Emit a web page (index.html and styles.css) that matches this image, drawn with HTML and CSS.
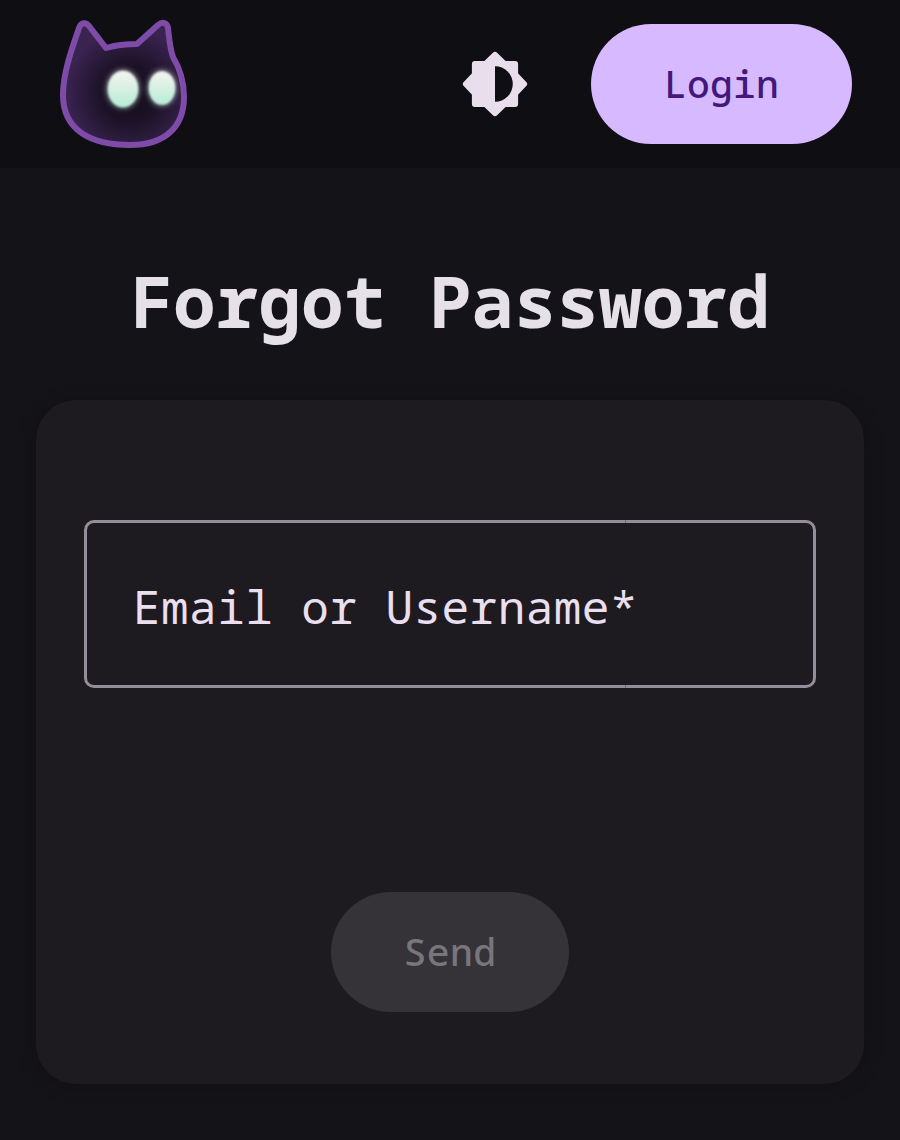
FILE: index.html
```html
<!DOCTYPE html>
<html lang="en">
<head>
<meta charset="utf-8">
<title>Forgot Password</title>
<link rel="stylesheet" href="styles.css">
</head>
<body>
<header class="topbar">
  <a class="logo" href="#" aria-label="Home">
    <svg class="logo-svg" viewBox="0 0 128 130" width="128" height="130">
      <defs>
        <radialGradient id="fur" gradientUnits="userSpaceOnUse" cx="70" cy="74" r="64">
          <stop offset="0" stop-color="#120c19"/>
          <stop offset="0.45" stop-color="#1c1227"/>
          <stop offset="1" stop-color="#3a2350"/>
        </radialGradient>
        <linearGradient id="eye" x1="0" y1="0" x2="0" y2="1">
          <stop offset="0" stop-color="#f3f5ef"/>
          <stop offset="1" stop-color="#b8ecd6"/>
        </linearGradient>
        <filter id="glow" x="-50%" y="-50%" width="200%" height="200%">
          <feGaussianBlur in="SourceGraphic" stdDeviation="3" result="halo"/>
          <feGaussianBlur in="SourceGraphic" stdDeviation="1.1" result="core"/>
          <feMerge><feMergeNode in="halo"/><feMergeNode in="core"/></feMerge>
        </filter>
      </defs>
      <path class="cat" d="M19 9 C21 3 26 3 29 7 L46 29 C56 26 67 25 77 25 L98 6 C103 2 107 4 108 9 C109 18 110 30 113 38 C119 48 124 62 124 78 C124 108 105 126 70 126 C32 126 3 112 3 76 C3 55 11 32 19 9 Z"/>
      <ellipse class="eye" cx="63" cy="70" rx="15" ry="18"/>
      <ellipse class="eye" cx="102" cy="69" rx="13" ry="16.5"/>
    </svg>
  </a>
  <div class="actions">
    <button class="toggle" aria-label="Toggle theme">
      <svg viewBox="-12 -12 24 24" width="72" height="72"><path class="toggle-shape" d="M0 -9.7 3.1 -6.7H6.7V-3.1L9.7 0 6.7 3.1V6.7H3.1L0 9.7 -3.1 6.7H-6.7V3.1L-9.7 0 -6.7 -3.1V-6.7H-3.1Z"/><path class="toggle-cut" d="M0 -5.93A5.93 5.93 0 0 1 0 5.93Z"/></svg>
    </button>
    <button class="login">Login</button>
  </div>
</header>
<main class="page">
  <h1 class="title">Forgot Password</h1>
  <form class="card">
    <div class="field"><span class="label">Email or Username*</span></div>
    <button class="send" type="button" disabled>Send</button>
  </form>
</main>
</body>
</html>
```
FILE: styles.css
```css
* { box-sizing: border-box; }
html, body { margin: 0; height: 100%; }
body {
  background: #141318;
  color: #e6e0e9;
  font-family: "Noto Sans Mono", monospace;
  overflow: hidden;
}
.topbar {
  height: 168px;
  background: #0f0e13;
  display: flex;
  align-items: flex-start;
  justify-content: space-between;
  padding: 19px 48px 0 60px;
}
.logo { display: block; width: 128px; height: 130px; }
.logo-svg { display: block; overflow: visible; }
.cat { fill: url(#fur); stroke: #7e4ba8; stroke-width: 6; stroke-linejoin: round; }
.eye { fill: url(#eye); filter: url(#glow); }
.actions { display: flex; align-items: center; gap: 60px; padding-top: 5px; }
.toggle { width: 72px; height: 72px; padding: 0; border: 0; background: none; display: block; }
.toggle svg { display: block; }
.toggle-shape { fill: #e9deec; stroke: #e9deec; stroke-width: 2; stroke-linejoin: round; }
.toggle-cut { fill: #0f0e13; }
.login {
  width: 261px; height: 120px; border: 0; border-radius: 60px;
  background: #d7b9ff; color: #42187a;
  font: 500 38px "Noto Sans Mono", monospace;
  letter-spacing: .2px;
  padding: 0 0 2px;
}
.page { display: flex; flex-direction: column; align-items: center; padding: 0 36px; }
.title {
  margin: 0;
  height: 232px;
  padding-top: 88px;
  font-size: 71px;
  line-height: 90px;
  font-weight: 700;
  color: #e6e0e9;
}
.card {
  width: 100%;
  height: 684px;
  background: #1d1b20;
  border-radius: 40px;
  box-shadow: 0 2px 20px rgba(0,0,0,.2);
  padding: 120px 48px 72px;
  display: flex;
  flex-direction: column;
  align-items: center;
  justify-content: space-between;
}
.field {
  position: relative;
  width: 100%;
  height: 168px;
  border: 3px solid #958e9a;
  border-radius: 10px;
  padding: 56px 46px 0;
}
.field::before, .field::after {
  content: "";
  position: absolute;
  left: 538px;
  width: 1px;
  height: 3px;
  background: #6f6874;
}
.field::before { top: -3px; }
.field::after { bottom: -3px; }
.label { display: block; font-size: 46px; line-height: 54px; letter-spacing: .45px; color: #eadfee; }
.send {
  width: 238px; height: 120px; border: 0; border-radius: 60px;
  background: #353238; color: #78757b;
  font: 500 38px "Noto Sans Mono", monospace;
  letter-spacing: .5px;
  padding: 0 0 2px;
}
```
